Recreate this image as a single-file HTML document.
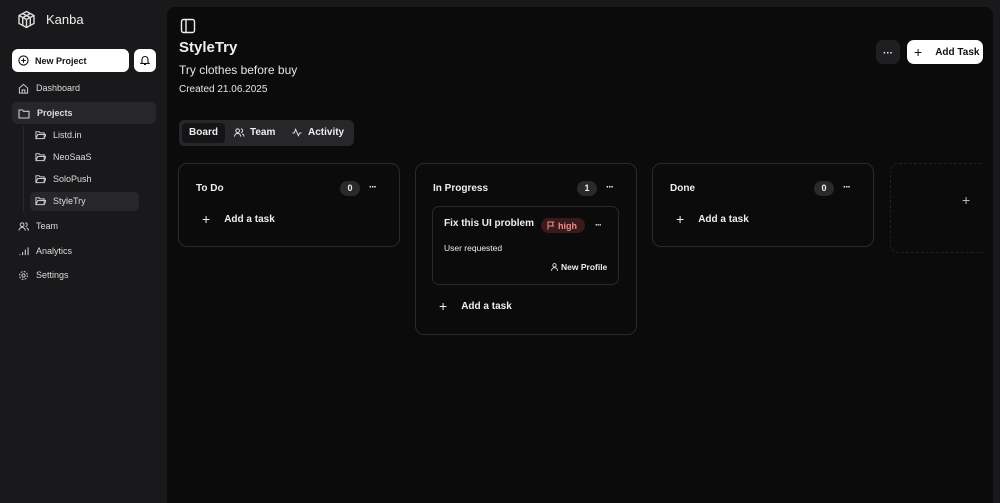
<!DOCTYPE html>
<html><head><meta charset="utf-8"><style>
*{box-sizing:border-box;margin:0;padding:0}
body{width:1000px;height:503px;overflow:hidden;background:#19191b;font-family:"Liberation Sans",sans-serif;color:#eee;position:relative}
.abs{position:absolute}
.side{font-size:9px;font-weight:bold;color:#ddd}
.item{position:absolute;display:flex;align-items:center;gap:7px;height:22px}
svg{display:block}
.main{position:absolute;left:167px;top:7px;width:826px;height:496px;background:#0b0b0b;border-radius:8px 8px 0 0;overflow:hidden}
.col{position:absolute;border:1px solid #2a2a2c;border-radius:9px;background:#0b0b0b}
.ch{position:absolute;font-size:10px;font-weight:bold;color:#eee}
.badge{position:absolute;width:20px;height:15px;border-radius:8px;background:#2a2a2c;font-size:9px;font-weight:bold;text-align:center;line-height:15px}
.dots{position:absolute;font-size:10px;font-weight:bold;letter-spacing:-1px;line-height:10px}
.add{position:absolute;font-size:10px;font-weight:bold;display:flex;align-items:center;gap:14px}
</style></head><body>
<svg class="abs" style="left:17px;top:10px" width="19" height="19" viewBox="0 0 19 19" fill="none" stroke="#ddd" stroke-width="1.4"><path d="M9.5 1.5L17 5.5V13.5L9.5 17.5L2 13.5V5.5Z"/><path d="M2 5.5L9.5 9.5L17 5.5M9.5 9.5V17.5M5.5 3.5L13 7.5M13.5 3.5L6 7.5M5.7 7.5v8M13.3 7.5v8"/></svg>
<div class="abs" style="left:46px;top:12px;font-size:13px;color:#eee">Kanba</div>
<div class="abs" style="left:12px;top:49px;width:117px;height:23px;background:#fff;border-radius:6px;display:flex;align-items:center;padding-left:6px;gap:6px;color:#111;font-size:9px;font-weight:bold"><svg width="11" height="11" viewBox="0 0 12 12" fill="none" stroke="#111" stroke-width="1.2"><circle cx="6" cy="6" r="5"/><path d="M6 3.5v5M3.5 6h5"/></svg>New Project</div>
<div class="abs" style="left:134px;top:49px;width:22px;height:23px;background:#fff;border-radius:6px"><svg style="margin:5px 0 0 5px" width="12" height="12" viewBox="0 0 12 12" fill="none" stroke="#111" stroke-width="1.1"><path d="M3 8.5V5.5a3 3 0 0 1 6 0v3l1 1H2z M5 10.5h2"/></svg></div>
<div class="item side" style="left:18px;top:77px;font-weight:normal"><svg width="11" height="11" viewBox="0 0 12 12" fill="none" stroke="#ccc" stroke-width="1.1"><path d="M1.5 5.5L6 1.5l4.5 4V11h-9z M4.5 11V7.5h3V11"/></svg>Dashboard</div>
<div class="abs" style="left:12px;top:102px;width:144px;height:22px;background:#27272a;border-radius:5px"></div>
<div class="item side" style="left:18px;top:102px"><svg width="12" height="11" viewBox="0 0 12 11" fill="none" stroke="#ccc" stroke-width="1.1"><path d="M1 2h3.5l1 1.3H11V10H1z"/></svg>Projects</div>
<div class="abs" style="left:23px;top:126px;width:1px;height:86px;background:#2a2a2c"></div>
<div class="abs" style="left:30px;top:192px;width:109px;height:19px;background:#27272a;border-radius:5px"></div>
<div class="item side" style="left:35px;top:124px;font-weight:normal"><svg width="11" height="10" viewBox="0 0 12 10" fill="none" stroke="#ccc" stroke-width="1.1"><path d="M1 1.5h3.5l1 1.2H10V9H1z M1 9l2-4.5h9L10 9"/></svg>Listd.in</div>
<div class="item side" style="left:35px;top:146px;font-weight:normal"><svg width="11" height="10" viewBox="0 0 12 10" fill="none" stroke="#ccc" stroke-width="1.1"><path d="M1 1.5h3.5l1 1.2H10V9H1z M1 9l2-4.5h9L10 9"/></svg>NeoSaaS</div>
<div class="item side" style="left:35px;top:168px;font-weight:normal"><svg width="11" height="10" viewBox="0 0 12 10" fill="none" stroke="#ccc" stroke-width="1.1"><path d="M1 1.5h3.5l1 1.2H10V9H1z M1 9l2-4.5h9L10 9"/></svg>SoloPush</div>
<div class="item side" style="left:35px;top:190px;font-weight:normal"><svg width="11" height="10" viewBox="0 0 12 10" fill="none" stroke="#ccc" stroke-width="1.1"><path d="M1 1.5h3.5l1 1.2H10V9H1z M1 9l2-4.5h9L10 9"/></svg>StyleTry</div>
<div class="item side" style="left:18px;top:215px;font-weight:normal"><svg width="11" height="11" viewBox="0 0 12 12" fill="none" stroke="#ccc" stroke-width="1.1"><circle cx="4.5" cy="4" r="2"/><path d="M1 10.5a3.5 3.5 0 0 1 7 0M8 2a2 2 0 0 1 0 4M9.5 7.5a3 3 0 0 1 1.8 3"/></svg>Team</div>
<div class="item side" style="left:18px;top:240px;font-weight:normal"><svg width="11" height="11" viewBox="0 0 12 12" fill="none" stroke="#ccc" stroke-width="1.2"><path d="M2 10v-1M5 10V6.5M8 10V4M11 10V1.5"/></svg>Analytics</div>
<div class="item side" style="left:18px;top:264px;font-weight:normal"><svg width="11" height="11" viewBox="0 0 12 12" fill="none" stroke="#ccc" stroke-width="1.1"><circle cx="6" cy="6" r="1.8"/><circle cx="6" cy="6" r="4.3" stroke-dasharray="2 1.4"/></svg>Settings</div>

<div class="main">
<svg class="abs" style="left:13px;top:11px" width="16" height="16" viewBox="0 0 16 16" fill="none" stroke="#eee" stroke-width="1.4"><rect x="1.5" y="1.5" width="13" height="13" rx="2"/><path d="M6 1.5v13"/></svg>
<div class="abs" style="left:12px;top:32px;font-size:15px;font-weight:bold">StyleTry</div>
<div class="abs" style="left:12px;top:56px;font-size:12px;color:#e6e6e6">Try clothes before buy</div>
<div class="abs" style="left:12px;top:77px;font-size:10px;color:#e6e6e6">Created 21.06.2025</div>
<div class="abs" style="left:12px;top:113px;width:175px;height:26px;background:#27272a;border-radius:5px"></div>
<div class="abs" style="left:15px;top:116px;width:43px;height:20px;background:#141416;border-radius:4px;font-size:10px;font-weight:bold;text-align:center;line-height:20px">Board</div>
<div class="abs" style="left:66px;top:120px;font-size:10px;font-weight:bold;display:flex;gap:5px;align-items:center"><svg width="12" height="11" viewBox="0 0 12 12" fill="none" stroke="#ddd" stroke-width="1.1"><circle cx="4.5" cy="4" r="2"/><path d="M1 10.5a3.5 3.5 0 0 1 7 0M8 2a2 2 0 0 1 0 4M9.5 7.5a3 3 0 0 1 1.8 3"/></svg>Team</div>
<div class="abs" style="left:124px;top:120px;font-size:10px;font-weight:bold;display:flex;gap:5px;align-items:center"><svg width="12" height="11" viewBox="0 0 12 12" fill="none" stroke="#ddd" stroke-width="1.1"><path d="M1 6.5h2l1.5-4 3 7 1.5-3h2"/></svg>Activity</div>
<div class="abs" style="left:709px;top:33px;width:24px;height:24px;background:#1f1f21;border-radius:7px;font-size:10px;font-weight:bold;display:flex;align-items:center;justify-content:center"><span style="line-height:10px;margin-top:4px">···</span></div>
<div class="abs" style="left:740px;top:33px;width:76px;height:24px;background:#fff;border-radius:7px;color:#111;font-size:10px;font-weight:bold;display:flex;align-items:center;padding-left:7px;gap:13px"><span style="font-size:14px;font-weight:normal">+</span>Add Task</div>

<div class="abs" style="left:0;top:0;width:816px;height:496px;overflow:hidden">
<div class="col" style="left:11px;top:156px;width:222px;height:84px">
 <div class="ch" style="left:17px;top:19px">To Do</div><div class="badge" style="left:161px;top:17px">0</div><div class="dots" style="left:190px;top:19px">···</div>
 <div class="add" style="left:23px;top:47px"><span style="font-size:14px;font-weight:normal">+</span>Add a task</div>
</div>
<div class="col" style="left:248px;top:156px;width:222px;height:172px">
 <div class="ch" style="left:17px;top:19px">In Progress</div><div class="badge" style="left:161px;top:17px">1</div><div class="dots" style="left:190px;top:19px">···</div>
 <div class="abs" style="left:16px;top:42px;width:187px;height:79px;border:1px solid #2a2a2c;border-radius:7px">
  <div class="abs" style="left:11px;top:11px;font-size:10px;font-weight:bold">Fix this UI problem</div>
  <div class="abs" style="left:108px;top:11px;width:44px;height:15px;background:#3a1a1a;border-radius:8px;color:#f08a8a;font-size:9px;font-weight:bold;display:flex;align-items:center;gap:3px;padding-left:6px"><svg width="8" height="9" viewBox="0 0 8 9" fill="none" stroke="#f08a8a" stroke-width="1"><path d="M1 8.5V1h5.5l-1 2 1 2H1"/></svg>high</div>
  <div class="dots" style="left:162px;top:13px;font-size:9px">···</div>
  <div class="abs" style="left:11px;top:36px;font-size:8.5px">User requested</div>
  <div class="abs" style="left:118px;top:55px;font-size:8.5px;font-weight:bold;display:flex;gap:3px;align-items:center"><svg width="7" height="8" viewBox="0 0 7 8" fill="none" stroke="#ddd" stroke-width=".9"><circle cx="3.5" cy="2.3" r="1.7"/><path d="M.5 7.7a3 3 0 0 1 6 0"/></svg>New Profile</div>
 </div>
 <div class="add" style="left:23px;top:134px"><span style="font-size:14px;font-weight:normal">+</span>Add a task</div>
</div>
<div class="col" style="left:485px;top:156px;width:222px;height:84px">
 <div class="ch" style="left:17px;top:19px">Done</div><div class="badge" style="left:161px;top:17px">0</div><div class="dots" style="left:190px;top:19px">···</div>
 <div class="add" style="left:23px;top:47px"><span style="font-size:14px;font-weight:normal">+</span>Add a task</div>
</div>
<div class="abs" style="left:723px;top:156px;width:110px;height:90px;border:1px dashed #222;border-radius:9px;color:#bbb;font-size:14px"><span class="abs" style="left:71px;top:28px">+</span></div>
</div>
</div>
</body></html>
